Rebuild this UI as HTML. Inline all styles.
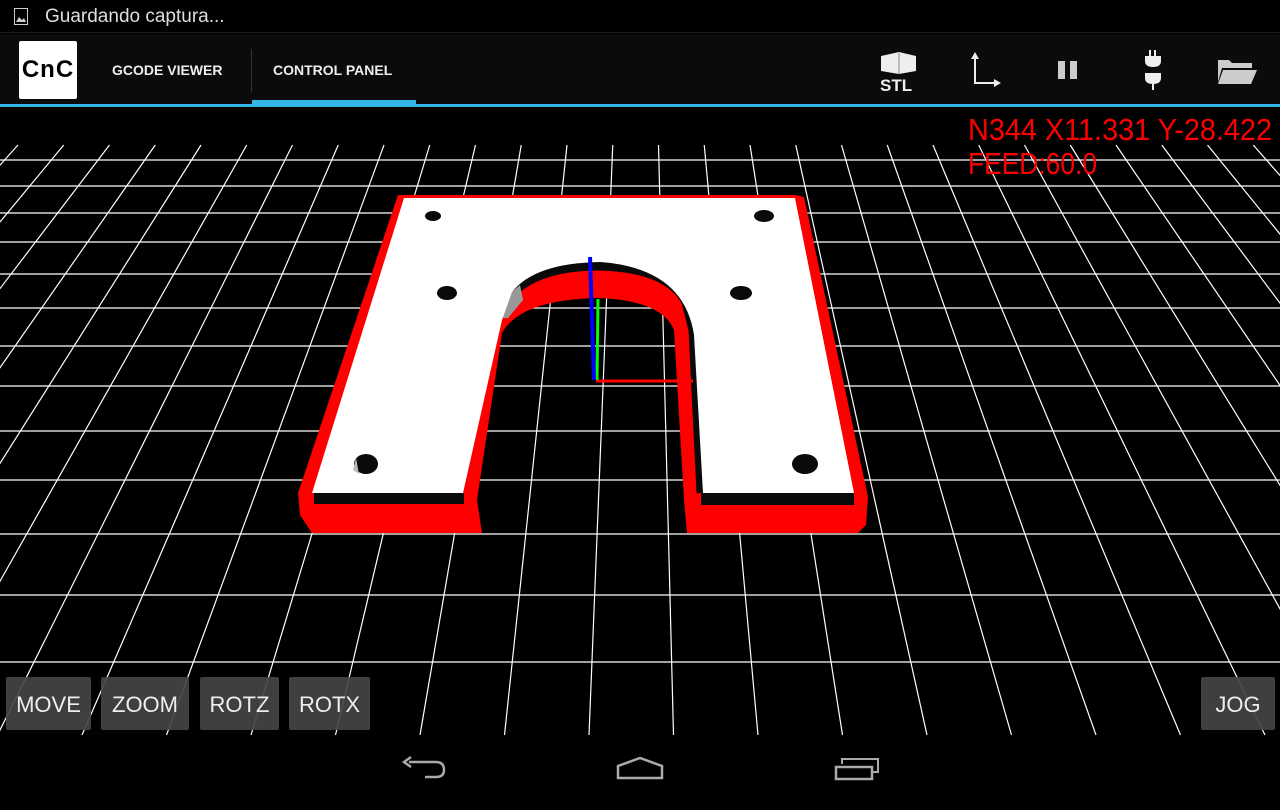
<!DOCTYPE html>
<html><head><meta charset="utf-8">
<style>
*{margin:0;padding:0;box-sizing:border-box}
body{width:1280px;height:800px;background:#000;overflow:hidden;position:relative;font-family:"Liberation Sans",sans-serif}
.status{position:absolute;left:0;top:0;width:1280px;height:33px;background:#000;border-bottom:1px solid #1c1c1c}
.status span{position:absolute;left:45px;top:6px;color:#ddd;font-size:19px}
.bar{position:absolute;left:0;top:34px;width:1280px;height:70px;background:#0a0b0d}
.logo{position:absolute;left:19px;top:41px;width:58px;height:58px;background:#fff;border-radius:2px;text-align:center;line-height:58px;font-weight:bold;font-size:24px;color:#000;letter-spacing:1px}
.tab{position:absolute;top:62px;color:#eee;font-weight:bold;font-size:14px}
.btn{position:absolute;top:677px;height:53px;background:rgba(68,68,68,0.92);border-radius:2px;color:#eee;font-size:22px;text-align:center;line-height:55px}
</style></head><body>
<svg id="g" width="1280" height="800" style="position:absolute;left:0;top:0">
<g id="grid" stroke="#fff" stroke-width="1.2"></g>
<!-- model -->
<path d="M398,195 L795,195 L804,197 L868,497 L866,525 L858,533 L687,533 L684,500 L674,330 Q662,300 597,298 Q520,300 502,333 L477,500 L482,533 L312,533 L300,515 L298,493 Z" fill="#f00"/>
<path d="M505,302 Q530,266 600,266 Q668,268 686,302 L693,330 L701,493" fill="none" stroke="#0a0a0a" stroke-width="9"/>
<polygon points="502,300 520,285 523,300 508,318 502,318" fill="#999"/>
<path d="M404,198 L795,198 L854,493 L703,493 L694,335 Q684,268 600,262 Q535,263 512,292 L502,320 L463,493 L312,493 Z" fill="#fff"/>
<rect x="314" y="493" width="150" height="11" fill="#0a0a0a"/>
<rect x="701" y="493" width="153" height="12" fill="#0a0a0a"/>
<ellipse cx="433" cy="216" rx="8" ry="5" fill="#0a0a0a"/>
<ellipse cx="447" cy="293" rx="10" ry="7" fill="#0a0a0a"/>
<ellipse cx="366" cy="464" rx="12" ry="10" fill="#0a0a0a"/>
<path d="M356,458 L353,470 L359,474 Z" fill="#bbb"/>
<ellipse cx="764" cy="216" rx="10" ry="6" fill="#0a0a0a"/>
<ellipse cx="741" cy="293" rx="11" ry="7" fill="#0a0a0a"/>
<ellipse cx="805" cy="464" rx="13" ry="10" fill="#0a0a0a"/>
<line x1="596" y1="381" x2="693" y2="381" stroke="#f00" stroke-width="3"/>
<line x1="598" y1="299" x2="597" y2="380" stroke="#0f0" stroke-width="3"/>
<line x1="590" y1="257" x2="594" y2="380" stroke="#00f" stroke-width="4"/>
<text x="968" y="140" fill="#f00" font-size="31" font-family="Liberation Sans" textLength="304" lengthAdjust="spacingAndGlyphs">N344 X11.331 Y-28.422</text>
<text x="968" y="174" fill="#f00" font-size="31" font-family="Liberation Sans" textLength="129" lengthAdjust="spacingAndGlyphs">FEED:60.0</text>
</svg>
<script>
var g=document.getElementById('grid'),s='';
var hs=[160,186,213,242,274,308,346,386,431,480,534,595,662];
hs.forEach(function(y){s+='<line x1="0" y1="'+y+'" x2="1280" y2="'+y+'"/>';});
for(var i=0;i<28;i++){var t=18+45.75*i,b=589+84.5*(i-13);s+='<line x1="'+t+'" y1="145" x2="'+b+'" y2="735"/>';}
g.innerHTML=s;
</script>
<div class="status"><svg width="14" height="17" style="position:absolute;left:14px;top:8px"><rect x="0.5" y="0.5" width="13" height="16" fill="none" stroke="#ccc"/><path d="M2,14 L5,9 L8,12 L10,10 L12,14 Z" fill="#ccc"/></svg><span>Guardando captura...</span></div>
<div class="bar"></div>
<div class="logo">CnC</div>
<div class="tab" style="left:112px">GCODE VIEWER</div>
<div style="position:absolute;left:251px;top:49px;width:1px;height:43px;background:#333"></div>
<div class="tab" style="left:273px">CONTROL PANEL</div>
<div style="position:absolute;left:0;top:104px;width:1280px;height:3px;background:#33b5e5"></div>
<div style="position:absolute;left:252px;top:100px;width:164px;height:7px;background:#33b5e5"></div>
<svg width="1280" height="110" style="position:absolute;left:0;top:0">
 <path d="M881,56 L899,52 L916,56 L916,71 L899,74 L881,71 Z" fill="#eee"/><line x1="899" y1="53" x2="899" y2="74" stroke="#888"/>
 <text x="880" y="91" fill="#eee" font-size="17" font-weight="bold" font-family="Liberation Sans">STL</text>
 <path d="M975,54 L975,83 L997,83" fill="none" stroke="#eee" stroke-width="2"/><path d="M971,59 L975,52 L979,59 Z M994,79 L1001,83 L994,87 Z" fill="#eee"/>
 <rect x="1058" y="61" width="7" height="18" fill="#ccc"/><rect x="1070" y="61" width="7" height="18" fill="#ccc"/>
 <path d="M1150,50 L1150,56 M1155,50 L1155,56" stroke="#eee" stroke-width="2"/>
 <path d="M1145,56 L1161,56 L1161,61 Q1161,67 1153,67 Q1145,67 1145,61 Z" fill="#eee"/>
 <path d="M1145,73 L1161,73 L1161,78 Q1161,84 1153,84 Q1145,84 1145,78 Z M1152,84 L1154,84 L1154,90 L1152,90 Z" fill="#eee"/>
 <path d="M1218,60 L1229,60 L1232,63 L1252,63 L1252,68 L1222,68 L1218,82 Z M1223,70 L1257,70 L1251,84 L1218,84 Z" fill="#ccc"/>
</svg>
<div class="btn" style="left:6px;width:85px">MOVE</div>
<div class="btn" style="left:101px;width:88px">ZOOM</div>
<div class="btn" style="left:200px;width:79px">ROTZ</div>
<div class="btn" style="left:289px;width:81px">ROTX</div>
<div class="btn" style="left:1201px;width:74px">JOG</div>
<svg width="1280" height="70" style="position:absolute;left:0;top:740px">
 <path d="M409,22 L436,22 Q444,22 444,30 Q444,37 436,37 L425,37 M411,17 L404,22 L411,27" fill="none" stroke="#aaa" stroke-width="2.5"/>
 <path d="M618,38 L618,26 L640,18 L662,26 L662,38 Z" fill="none" stroke="#aaa" stroke-width="2.5"/>
 <path d="M842,24 L842,19 L878,19 L878,32 L872,32" fill="none" stroke="#aaa" stroke-width="2"/>
 <rect x="836" y="27" width="36" height="12" fill="none" stroke="#aaa" stroke-width="2.5"/>
</svg>
</body></html>
